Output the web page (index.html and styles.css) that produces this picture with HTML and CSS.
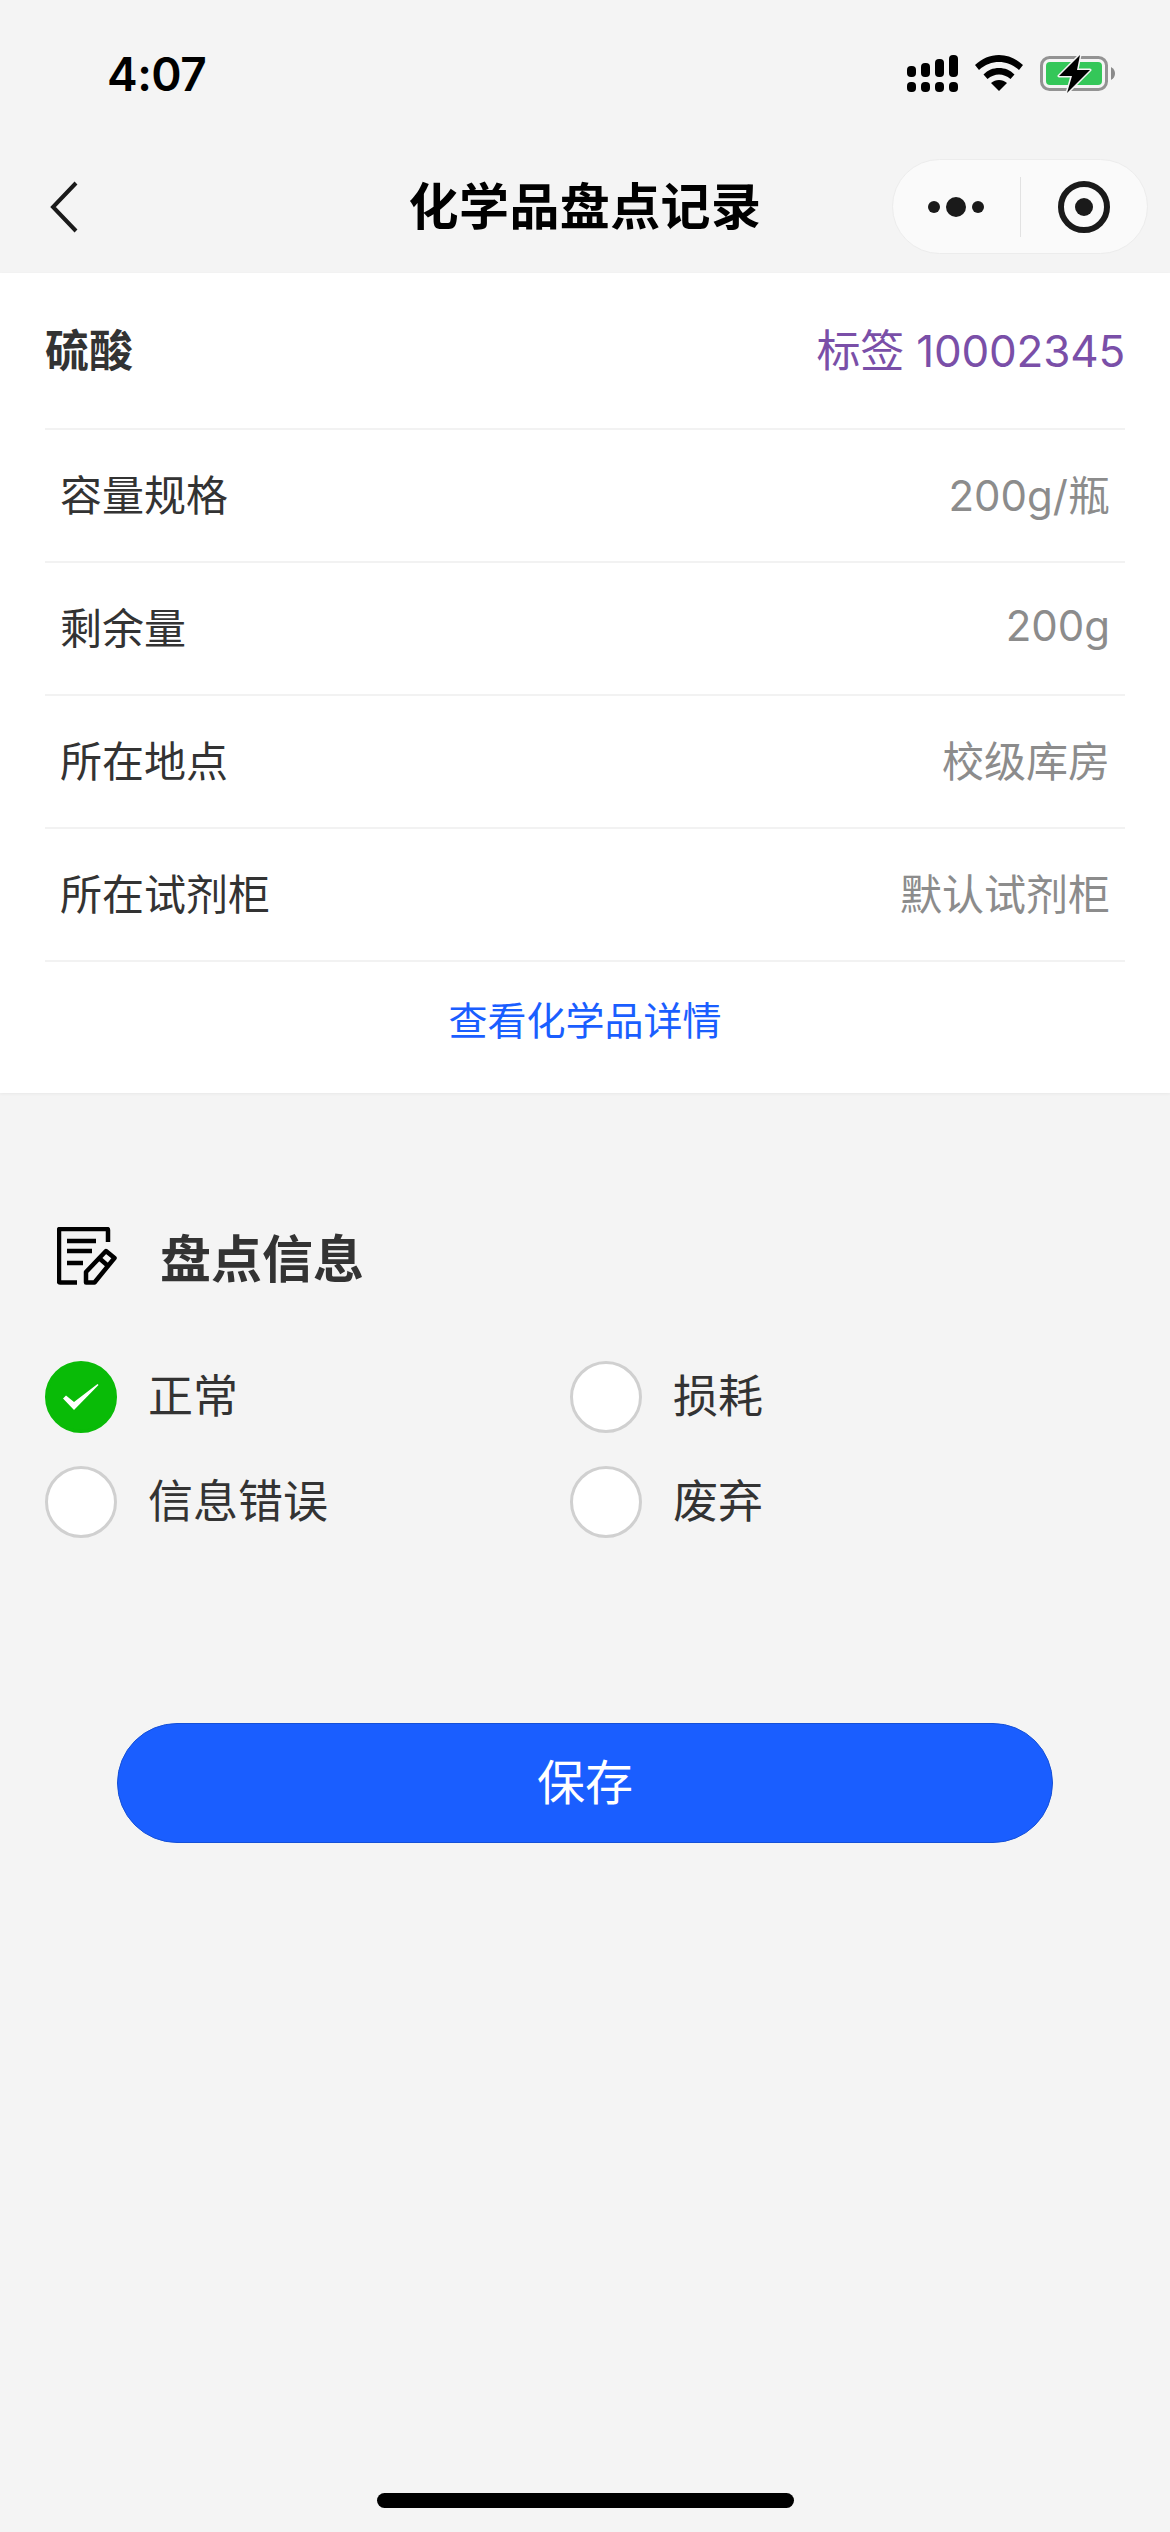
FILE: index.html
```html
<!DOCTYPE html>
<html lang="zh-CN">
<head>
    <meta charset="UTF-8">
    <meta name="viewport" content="width=device-width, initial-scale=1.0">
    <title>化学品盘点记录</title>
    <link rel="stylesheet" href="styles.css">
</head>
<body>
    <div class="page">
        <div class="status-bar">
            <span class="time">4:07</span>
            <div class="status-icons">
                <svg class="icon-signal" width="51" height="37" viewBox="0 0 51 37">
                    <rect x="0" y="11" width="9" height="11" rx="4"/>
                    <rect x="14" y="8" width="9" height="14" rx="4"/>
                    <rect x="28" y="4" width="9" height="18" rx="4"/>
                    <rect x="42" y="0" width="9" height="22" rx="4"/>
                    <rect x="0" y="27" width="9" height="10" rx="4"/>
                    <rect x="14" y="27" width="9" height="10" rx="4"/>
                    <rect x="28" y="27" width="9" height="10" rx="4"/>
                    <rect x="42" y="27" width="9" height="10" rx="4"/>
                </svg>
                <svg class="icon-wifi" width="48" height="36" viewBox="0 0 48 36">
                    <path d="M24 0C15 0 7 3.500 0 10L4 15C10 9.500 17 7 24 7C31 7 38 9.500 44 15L48 10C41 3.500 33 0 24 0Z"/>
                    <path d="M24 13C18 13 13 15 8.500 19.500L12.500 24C16 21 20 19.500 24 19.500C28 19.500 32 21 35.500 24L39.500 19.500C35 15 30 13 24 13Z"/>
                    <path d="M24 25C21 25 18.500 26 16 28L24 36L32 28C29.500 26 27 25 24 25Z"/>
                </svg>
                <svg class="icon-battery" width="75" height="38" viewBox="0 0 75 38">
                    <rect x="1.500" y="2.500" width="65" height="32" rx="8" fill="none" stroke="#939393" stroke-width="3"/>
                    <rect x="6" y="7" width="56" height="23" rx="4" fill="#34c759"/>
                    <path d="M73 13.500C74.500 15 75 17 75 18.500C75 20 74.500 22 73 23.500L71 25V12Z" fill="#8a8a8a"/>
                    <path d="M40 0L19 21H32L27 38L50 15H37Z" fill="#000" stroke="#f4f4f4" stroke-width="3" paint-order="stroke" stroke-linejoin="round"/>
                </svg>
            </div>
        </div>

        <header class="nav-bar">
            <svg class="icon-back" width="28" height="52" viewBox="0 0 28 52">
                <path d="M26 2L3 26L26 50" fill="none" stroke="#1a1a1a" stroke-width="4"/>
            </svg>
            <h1 class="nav-title">化学品盘点记录</h1>
            <div class="capsule">
                <div class="capsule-item">
                    <svg width="56" height="20" viewBox="0 0 56 20">
                        <circle cx="6" cy="10" r="6"/>
                        <circle cx="28" cy="10" r="10"/>
                        <circle cx="50" cy="10" r="6"/>
                    </svg>
                </div>
                <div class="capsule-line"></div>
                <div class="capsule-item">
                    <svg width="52" height="52" viewBox="0 0 52 52">
                        <circle cx="26" cy="26" r="23" fill="none" stroke="#1a1a1a" stroke-width="6"/>
                        <circle cx="26" cy="26" r="9"/>
                    </svg>
                </div>
            </div>
        </header>

        <section class="info-panel">
            <div class="info-head">
                <span class="chem-name">硫酸</span>
                <span class="chem-tag">标签 10002345</span>
            </div>
            <div class="info-row"><span>容量规格</span><span class="info-value">200g/瓶</span></div>
            <div class="info-row"><span>剩余量</span><span class="info-value">200g</span></div>
            <div class="info-row"><span>所在地点</span><span class="info-value">校级库房</span></div>
            <div class="info-row"><span>所在试剂柜</span><span class="info-value">默认试剂柜</span></div>
            <a class="detail-link" href="#">查看化学品详情</a>
        </section>

        <section class="check-section">
            <div class="section-head">
                <svg class="icon-note" width="60" height="58" viewBox="0 0 60 58">
                    <path d="M20 55.500H3C2.200 55.500 2 55.300 2 54.500V3C2 2.200 2.200 2 3 2H50C50.800 2 51 2.200 51 3V15" fill="none" stroke="#000" stroke-width="4.500"/>
                    <path d="M10 14H39M10 24H35M10 36H26" fill="none" stroke="#000" stroke-width="4.500"/>
                    <path d="M29 55.500V45L49 24L57.500 31L37.500 55.500ZM42 31L50 38" fill="none" stroke="#000" stroke-width="4.500" stroke-linejoin="round"/>
                </svg>
                <h2 class="section-title">盘点信息</h2>
            </div>
            <div class="option-grid">
                <div class="option">
                    <span class="radio radio-on">
                        <svg width="36" height="26" viewBox="0 0 36 26">
                            <path d="M0 14.500L3 11.500L11 18L34.500 0L35.500 1L11 26Z" fill="#fff"/>
                        </svg>
                    </span>
                    <span class="option-text">正常</span>
                </div>
                <div class="option"><span class="radio"></span><span class="option-text">损耗</span></div>
                <div class="option"><span class="radio"></span><span class="option-text">信息错误</span></div>
                <div class="option"><span class="radio"></span><span class="option-text">废弃</span></div>
            </div>
            <button class="save-btn">保存</button>
        </section>

        <div class="home-bar"></div>
    </div>
</body>
</html>
```

FILE: styles.css
```css
* {
    margin: 0;
    padding: 0;
    box-sizing: border-box;
}

body {
    background-color: #f4f4f4;
    font-family: "Inter", "Noto Sans CJK SC", sans-serif;
    color: #333;
}

.page {
    height: 2532px;
    display: flex;
    flex-direction: column;
}

/* Status bar */
.status-bar {
    height: 130px;
    padding: 39px 55px 0 107px;
    display: flex;
    justify-content: space-between;
    align-items: flex-start;
}

.time {
    font-size: 46px;
    line-height: 70px;
    font-weight: 600;
    letter-spacing: -0.5px;
    color: #000;
}

.status-icons {
    display: flex;
    align-items: flex-start;
    gap: 17px;
    padding-top: 16px;
}

/* Nav bar */
.nav-bar {
    height: 143px;
    padding: 29px 22px 0 50px;
    display: flex;
    justify-content: space-between;
    align-items: flex-start;
    position: relative;
}

.icon-back {
    margin-top: 22px;
}

.nav-title {
    position: absolute;
    left: 0;
    right: 0;
    top: 41px;
    text-align: center;
    font-size: 50px;
    line-height: 72px;
    font-weight: 700;
    letter-spacing: 0.4px;
    color: #000;
}

.capsule {
    width: 256px;
    height: 95px;
    background-color: #fafafa;
    border: 1px solid #ececec;
    border-radius: 48px;
    display: flex;
    align-items: center;
}

.capsule-item {
    flex: 1;
    display: flex;
    justify-content: center;
    align-items: center;
    fill: #1a1a1a;
}

.capsule-line {
    width: 1px;
    height: 60px;
    background-color: #e2e2e2;
}

/* Chemical info */
.info-panel {
    background-color: #fff;
    padding: 0 45px;
    box-shadow: 0 1px 3px rgba(0, 0, 0, 0.05);
}

.info-head {
    height: 155px;
    display: flex;
    justify-content: space-between;
    align-items: center;
    padding-bottom: 6px;
}

.chem-name {
    font-size: 44px;
    font-weight: 700;
}

.chem-tag {
    font-size: 44px;
    letter-spacing: -0.2px;
    color: #7a4fa8;
}

.info-row {
    height: 133px;
    padding: 0 15px 6px;
    border-top: 2px solid #f2f2f2;
    display: flex;
    justify-content: space-between;
    align-items: center;
    font-size: 42px;
}

.info-value {
    color: #8c8c8c;
}

.detail-link {
    display: block;
    height: 133px;
    border-top: 2px solid #f2f2f2;
    line-height: 118px;
    text-align: center;
    font-size: 39px;
    color: #1a5eff;
    text-decoration: none;
}

/* Check section */
.check-section {
    padding: 0 45px;
}

.section-head {
    display: flex;
    align-items: center;
    margin-top: 126px;
    padding-left: 12px;
    gap: 43px;
}

.section-title {
    font-size: 51px;
    font-weight: 700;
}

.option-grid {
    display: grid;
    grid-template-columns: 525px 525px;
    row-gap: 33px;
    margin-top: 68px;
}

.option {
    height: 72px;
    display: flex;
    align-items: center;
    gap: 31px;
    font-size: 45px;
}

.option-text {
    padding-bottom: 7px;
}

.radio {
    width: 72px;
    height: 72px;
    border: 3px solid #d0d0d0;
    border-radius: 50%;
    background-color: #fff;
    display: flex;
    justify-content: center;
    align-items: center;
}

.radio-on {
    background-color: #09bb07;
    border-color: #09bb07;
}

.save-btn {
    display: block;
    width: 936px;
    height: 120px;
    margin: 185px auto 0;
    padding-bottom: 8px;
    background-color: #1a5eff;
    border: 1px solid #1450d8;
    border-radius: 60px;
    color: #fff;
    font-family: inherit;
    font-size: 48px;
}

/* Home indicator */
.home-bar {
    width: 417px;
    height: 15px;
    margin: auto auto 24px;
    background-color: #000;
    border-radius: 8px;
}
```
